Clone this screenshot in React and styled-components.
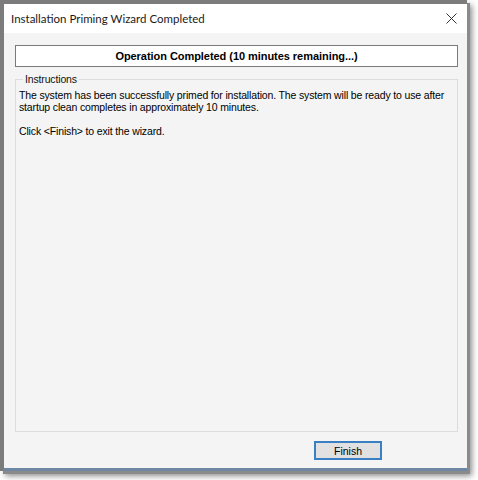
import React from 'react'
import styled, { createGlobalStyle } from 'styled-components'

const Global = createGlobalStyle`
  html, body {
    margin: 0;
    padding: 0;
    background: #ffffff;
  }
  body {
    width: 478px;
    height: 480px;
    overflow: hidden;
  }
`

const Frame = styled.div`
  width: 467px;
  height: 471px;
  padding: 4px 0 0 4px;
  box-sizing: border-box;
  background: #7c7c7c;
  box-shadow: 3px 3px 0 #8a8a8a, 5px 5px 6px rgba(0, 0, 0, 0.45);
  display: flex;
`

const Window = styled.div`
  flex: 1;
  display: flex;
  flex-direction: column;
  background: #f4f4f4;
  border-bottom: 3px solid #6e87a3;
`

const TitleBar = styled.div`
  height: 29px;
  flex: none;
  background: #ffffff;
  display: flex;
  align-items: center;
  justify-content: space-between;
  padding: 0 10px 0 7px;
  font-family: Lato, "Noto Sans", sans-serif;
  font-size: 11.5px;
  color: #1a1a1a;
`

const Close = styled.svg`
  width: 11px;
  height: 11px;
`

const Body = styled.div`
  flex: 1;
  display: flex;
  flex-direction: column;
  padding: 12px 9px 8px 11px;
  font-family: "Liberation Sans", Arial, sans-serif;
  font-size: 10.5px;
  letter-spacing: -0.15px;
  color: #000;
`

const StatusBox = styled.div`
  height: 22px;
  box-sizing: border-box;
  border: 1px solid #7a7a7a;
  background: #ffffff;
  display: flex;
  align-items: center;
  justify-content: center;
  font-weight: bold;
  font-size: 11px;
  letter-spacing: -0.05px;
`

const Group = styled.fieldset`
  flex: 1;
  margin: 6px 0 0 0;
  padding: 4px 3px 0 3px;
  border: 1px solid #dcdcdc;
  min-width: 0;
`

const Legend = styled.legend`
  padding: 0 2px;
  margin-left: 4px;
  color: #111;
`

const Para = styled.p`
  margin: 0 0 12px 0;
  line-height: 12px;
`

const Footer = styled.div`
  flex: none;
  display: flex;
  justify-content: flex-end;
  padding: 9px 76px 0 0;
`

const Button = styled.button`
  width: 68px;
  height: 19px;
  box-sizing: border-box;
  border: 2px solid #3a7fc4;
  background: #e1e1e1;
  font-family: "Liberation Sans", Arial, sans-serif;
  font-size: 10.5px;
  color: #000;
  padding: 0;
`

export default function App() {
  return (
    <>
      <Global />
      <Frame>
        <Window>
          <TitleBar>
            <span>Installation Priming Wizard Completed</span>
            <Close viewBox="0 0 11 11">
              <path d="M0.5 0.5 L10.5 10.5 M10.5 0.5 L0.5 10.5" stroke="#333" strokeWidth="1" fill="none" />
            </Close>
          </TitleBar>
          <Body>
            <StatusBox>Operation Completed (10 minutes remaining...)</StatusBox>
            <Group>
              <Legend>Instructions</Legend>
              <Para>
                The system has been successfully primed for installation. The system will be ready to use after
                startup clean completes in approximately 10 minutes.
              </Para>
              <Para>Click &lt;Finish&gt; to exit the wizard.</Para>
            </Group>
            <Footer>
              <Button>Finish</Button>
            </Footer>
          </Body>
        </Window>
      </Frame>
    </>
  )
}
